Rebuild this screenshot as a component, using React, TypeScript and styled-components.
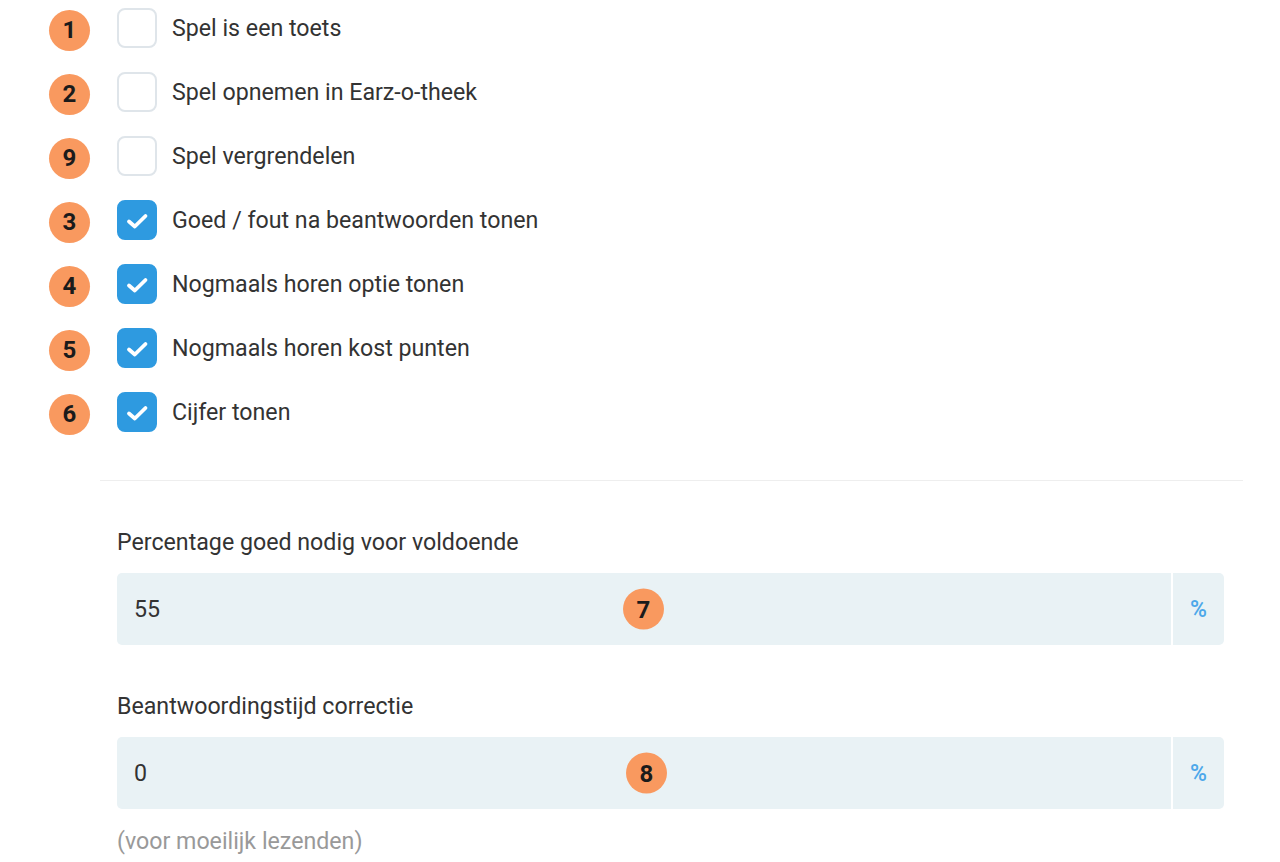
import React from 'react';
import styled, { createGlobalStyle } from 'styled-components';

const GlobalStyle = createGlobalStyle`
  html, body {
    margin: 0;
    padding: 0;
    background: #ffffff;
    font-family: Roboto, "Liberation Sans", Arial, sans-serif;
    color: #333333;
  }
  * {
    box-sizing: border-box;
  }
`;

const Page = styled.div`
  width: 1280px;
  height: 862px;
  overflow: hidden;
`;

const OptionList = styled.div`
  display: flex;
  flex-direction: column;
  gap: 20px;
  padding: 8px 0 0 49px;
`;

const OptionRow = styled.label`
  display: flex;
  align-items: center;
  height: 44px;
`;

const Badge = styled.span`
  display: inline-flex;
  align-items: center;
  justify-content: center;
  width: 41px;
  height: 41px;
  border-radius: 50%;
  background: #f9995f;
  color: #1b1b1b;
  font-weight: 700;
  font-size: 24px;
  flex-shrink: 0;
`;

const Box = styled.span<{ $checked: boolean }>`
  display: inline-flex;
  align-items: center;
  justify-content: center;
  width: 40px;
  height: 40px;
  margin-left: 27px;
  margin-top: -4px;
  border-radius: 8px;
  background: ${p => (p.$checked ? '#2e9ae0' : '#ffffff')};
  border: 2px solid ${p => (p.$checked ? '#2e9ae0' : '#dfe5ea')};

  svg {
    margin-top: 2px;
  }
`;

const OptionText = styled.span`
  margin-left: 15px;
  margin-top: -5px;
  font-size: 23.2px;
  color: #333333;
`;

const Settings = styled.div`
  margin: 44px 0 0 100px;
  width: 1143px;
  border-top: 1px solid #eeeeee;
  padding: 47px 19px 0 17px;
`;

const Field = styled.div`
  display: flex;
  flex-direction: column;
  & + & {
    margin-top: 47px;
  }
`;

const FieldLabel = styled.div`
  font-size: 23.2px;
  line-height: 28px;
  color: #333333;
  margin-bottom: 17px;
`;

const InputGroup = styled.div`
  position: relative;
  display: flex;
  height: 72px;
  border-radius: 5px;
  background: #e9f2f5;
  overflow: hidden;
`;

const InputValue = styled.div`
  flex: 1;
  display: flex;
  align-items: center;
  padding-left: 17px;
  font-size: 23.2px;
  color: #333333;
`;

const Addon = styled.div`
  width: 53px;
  border-left: 2px solid #ffffff;
  display: flex;
  align-items: center;
  justify-content: center;
  color: #4da8ea;
  font-size: 23px;
  font-weight: 500;
`;

const FloatBadge = styled(Badge)<{ $left: number }>`
  position: absolute;
  top: 50%;
  left: ${p => p.$left}px;
  transform: translateY(-50%);
`;

const Hint = styled.div`
  margin-top: 18px;
  font-size: 23.2px;
  line-height: 28px;
  color: #999999;
`;

const Check = () => (
  <svg width="24" height="18" viewBox="0 0 24 18" fill="none">
    <path d="M4 9.5l5.8 5L20.5 4" stroke="#ffffff" strokeWidth="3.8" strokeLinecap="round" strokeLinejoin="round" />
  </svg>
);

const options = [
  { n: 1, label: 'Spel is een toets', checked: false },
  { n: 2, label: 'Spel opnemen in Earz-o-theek', checked: false },
  { n: 9, label: 'Spel vergrendelen', checked: false },
  { n: 3, label: 'Goed / fout na beantwoorden tonen', checked: true },
  { n: 4, label: 'Nogmaals horen optie tonen', checked: true },
  { n: 5, label: 'Nogmaals horen kost punten', checked: true },
  { n: 6, label: 'Cijfer tonen', checked: true },
];

export default function App() {
  return (
    <Page>
      <GlobalStyle />
      <OptionList>
        {options.map(o => (
          <OptionRow key={o.n}>
            <Badge>{o.n}</Badge>
            <Box $checked={o.checked}>{o.checked && <Check />}</Box>
            <OptionText>{o.label}</OptionText>
          </OptionRow>
        ))}
      </OptionList>
      <Settings>
        <Field>
          <FieldLabel>Percentage goed nodig voor voldoende</FieldLabel>
          <InputGroup>
            <InputValue>55</InputValue>
            <Addon>%</Addon>
            <FloatBadge $left={506}>7</FloatBadge>
          </InputGroup>
        </Field>
        <Field>
          <FieldLabel>Beantwoordingstijd correctie</FieldLabel>
          <InputGroup>
            <InputValue>0</InputValue>
            <Addon>%</Addon>
            <FloatBadge $left={509}>8</FloatBadge>
          </InputGroup>
          <Hint>(voor moeilijk lezenden)</Hint>
        </Field>
      </Settings>
    </Page>
  );
}
